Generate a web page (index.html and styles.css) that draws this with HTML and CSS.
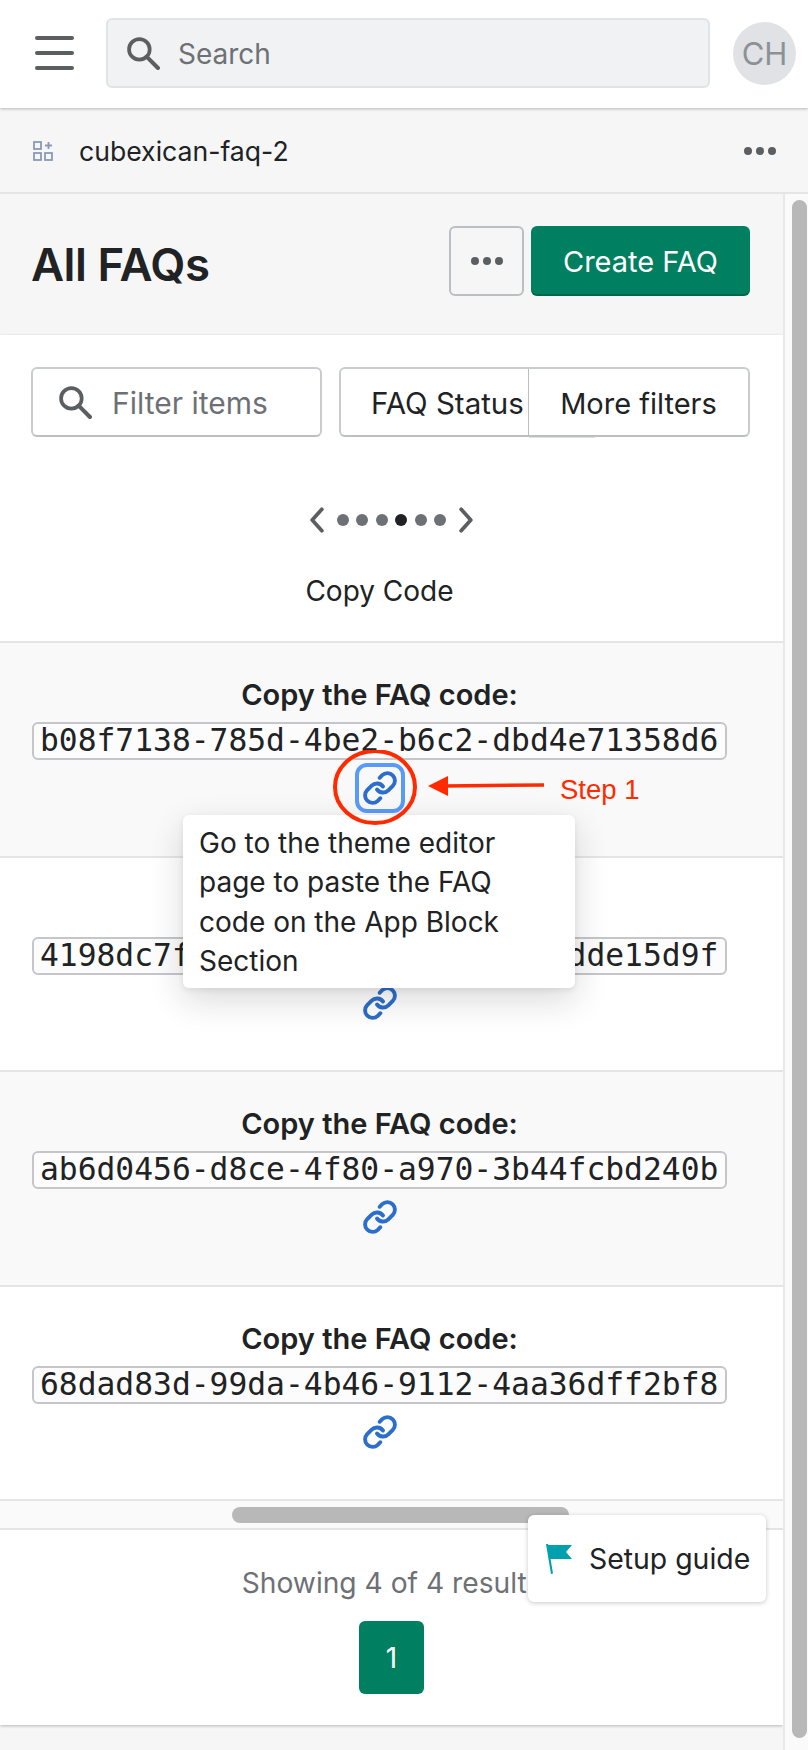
FILE: index.html
```html
<!DOCTYPE html>
<html lang="en">
<head>
  <meta charset="UTF-8" />
  <meta name="viewport" content="width=device-width, initial-scale=1.0" />
  <title>All FAQs</title>
  <link rel="stylesheet" href="styles.css">
</head>
<body>
  <svg class="defs" width="0" height="0">
    <symbol id="i-search" viewBox="0 0 32 32">
      <circle cx="12" cy="12" r="10" fill="none" stroke="currentColor" stroke-width="3.6" />
      <path d="M19 19l11 11" fill="none" stroke="currentColor" stroke-width="4" stroke-linecap="round" />
    </symbol>
    <symbol id="i-dots" viewBox="0 0 32 8">
      <circle cx="4" cy="4" r="4" fill="currentColor" />
      <circle cx="16" cy="4" r="4" fill="currentColor" />
      <circle cx="28" cy="4" r="4" fill="currentColor" />
    </symbol>
    <symbol id="i-link" viewBox="0 0 24 24">
      <path d="M10 13a5 5 0 0 0 7.54.54l3-3a5 5 0 0 0-7.07-7.07l-1.72 1.71" fill="none" stroke="currentColor" stroke-width="2.6" stroke-linecap="round" stroke-linejoin="round" />
      <path d="M14 11a5 5 0 0 0-7.54-.54l-3 3a5 5 0 0 0 7.07 7.07l1.71-1.71" fill="none" stroke="currentColor" stroke-width="2.6" stroke-linecap="round" stroke-linejoin="round" />
    </symbol>
  </svg>

  <header class="topbar">
    <div class="burger"><span></span><span></span><span></span></div>
    <div class="search">
      <svg class="search-icon"><use href="#i-search" /></svg>
      <span>Search</span>
    </div>
    <div class="avatar">CH</div>
  </header>

  <div class="appbar">
    <svg class="app-icon" viewBox="0 0 20 20">
      <rect x="1" y="1" width="7" height="7" />
      <rect x="1" y="12" width="7" height="7" />
      <rect x="12" y="12" width="7" height="7" />
      <path d="M15.500 1v7M12 4.500h7" />
    </svg>
    <span class="app-name">cubexican-faq-2</span>
    <svg class="app-dots"><use href="#i-dots" /></svg>
  </div>

  <div class="frame">
    <main class="main">
      <div class="page-head">
        <h1>All FAQs</h1>
        <div class="actions">
          <button class="btn-more"><svg><use href="#i-dots" /></svg></button>
          <button class="btn-primary">Create FAQ</button>
        </div>
      </div>

      <section class="card">
        <div class="filters">
          <div class="filter-input">
            <svg class="search-icon"><use href="#i-search" /></svg>
            <span>Filter items</span>
          </div>
          <div class="filter-group">
            <button class="filter-status">FAQ Status</button>
            <button class="filter-more">More filters</button>
          </div>
        </div>

        <div class="pager-dots">
          <svg class="chev" viewBox="0 0 14 24"><path d="M12 2L3 12l9 10" /></svg>
          <i></i><i></i><i></i><i class="on"></i><i></i><i></i>
          <svg class="chev" viewBox="0 0 14 24"><path d="M2 2l9 10-9 10" /></svg>
        </div>

        <div class="col-head">Copy Code</div>

        <div class="row shaded">
          <strong>Copy the FAQ code:</strong>
          <div class="code">b08f7138-785d-4be2-b6c2-dbd4e71358d6</div>
          <div class="link-btn focus"><svg><use href="#i-link" /></svg></div>
          <div class="tooltip">Go to the theme editor page to paste the FAQ code on the App Block Section</div>
          <svg class="note" viewBox="0 0 320 80">
            <ellipse cx="43" cy="37" rx="40" ry="36" />
            <path class="shaft" d="M112 36L212 35" />
            <path class="head" d="M96 36l20-10v20z" />
          </svg>
          <span class="step">Step 1</span>
        </div>
        <div class="row covered">
          <div class="code">4198dc7f-6a1c-4d35-8e27-f0c1dde15d9f</div>
          <div class="link-btn"><svg><use href="#i-link" /></svg></div>
        </div>
        <div class="row shaded">
          <strong>Copy the FAQ code:</strong>
          <div class="code">ab6d0456-d8ce-4f80-a970-3b44fcbd240b</div>
          <div class="link-btn"><svg><use href="#i-link" /></svg></div>
        </div>
        <div class="row">
          <strong>Copy the FAQ code:</strong>
          <div class="code">68dad83d-99da-4b46-9112-4aa36dff2bf8</div>
          <div class="link-btn"><svg><use href="#i-link" /></svg></div>
        </div>

        <div class="hscroll"><div class="hthumb"></div></div>

        <div class="results">
          <p>Showing 4 of 4 results</p>
          <div class="page-num">1</div>
        </div>
      </section>
    </main>
    <div class="gutter"><div class="vthumb"></div></div>
  </div>

  <div class="guide">
    <svg viewBox="0 0 28 32"><path d="M1 1l5 30 2-.4-2.400-14.600H27l-6-7 6-7H3.500L3 1z" /></svg>
    <span>Setup guide</span>
  </div>
</body>
</html>
```

FILE: styles.css
```css
* { box-sizing: border-box; }
html, body { margin: 0; padding: 0; }
body { position: relative; width: 808px; height: 1750px; overflow: hidden; background: #f6f6f7; color: #202223; font-family: Inter, "Noto Sans", sans-serif; font-size: 28px; }
button { font: inherit; color: inherit; cursor: pointer; }
.defs { position: absolute; }

.topbar { position: relative; z-index: 2; display: flex; align-items: center; height: 108px; padding: 0 12px 2px 35px; background: white; box-shadow: 0 1px 3px rgba(0,0,0,0.25); }
.burger { display: flex; flex-direction: column; gap: 11px; width: 39px; margin-right: 32px; }
.burger span { display: block; height: 4px; border-radius: 2px; background: #5c5f62; }
.search { display: flex; align-items: center; flex: 1; height: 70px; padding-left: 19px; background: #f1f2f3; border: 2px solid #e1e3e5; border-radius: 6px; color: #6d7175; }
.search span { padding-top: 2px; }
.search-icon { flex: none; width: 33px; height: 33px; margin-right: 18px; color: #5c5f62; }
.avatar { display: flex; align-items: center; justify-content: center; width: 63px; height: 63px; margin-left: 23px; border-radius: 50%; background: #e0e2e5; color: #8c9196; font-size: 31px; }

.appbar { display: flex; align-items: center; height: 86px; padding: 2px 32px 0 33px; border-bottom: 2px solid #e4e5e7; }
.app-icon { width: 20px; height: 20px; margin-right: 26px; fill: none; stroke: #8a9ab5; stroke-width: 1.800; }
.app-name { flex: 1; font-size: 26.600px; }
.app-dots { width: 32px; height: 8px; color: #5c5f62; }

.frame { display: flex; }
.main { width: 783px; }
.gutter { width: 25px; height: 1556px; padding: 6px 3px 0 7px; background: #fafafa; border-left: 2px solid #e8e8e9; }
.vthumb { width: 15px; height: 1538px; border-radius: 8px; background: #b8b8b8; }

.page-head { display: flex; justify-content: space-between; height: 141px; padding: 32px 33px 0 31px; }
h1 { margin: 11px 0 0; font-size: 45.500px; font-weight: 600; letter-spacing: -0.5px; }
.actions { display: flex; gap: 7px; }
.btn-more { display: flex; align-items: center; justify-content: center; width: 75px; height: 70px; background: transparent; border: 2px solid #babfc3; border-radius: 6px; color: #5c5f62; }
.btn-more svg { width: 32px; height: 8px; }
.btn-primary { width: 219px; height: 70px; padding: 0; background: #008060; color: white; border: 0; border-radius: 6px; font-size: 29px; box-shadow: inset 0 -2px 0 rgba(0,0,0,0.2); }

.card { height: 1390px; background: white; box-shadow: 0 1px 3px rgba(0,0,0,0.25); }
.filters { display: flex; gap: 17px; padding: 32px 33px 0 31px; }
.filter-input { display: flex; align-items: center; width: 291px; height: 70px; padding: 2px 0 0 26px; border: 2px solid #c9cccf; border-bottom-color: #babfc3; border-radius: 6px; color: #6d7175; font-size: 30px; }
.filter-input .search-icon { margin-top: -2px; margin-right: 20px; }
.filter-group { display: flex; width: 411px; height: 70px; border: 2px solid #c9cccf; border-bottom-color: #babfc3; border-radius: 6px; font-size: 29.500px; }
.filter-status { width: 188px; padding: 2px 0 0 30px; background: none; border: 0; border-right: 1px solid #babfc3; text-align: left; white-space: nowrap; }
.filter-more { position: relative; flex: 1; padding: 2px 0 0; background: none; border: 0; font-size: 29px; }
.filter-more::after { content: ""; position: absolute; left: 0; bottom: -3px; width: 66px; height: 1px; background: #dfe1e3; }

.pager-dots { display: flex; align-items: center; justify-content: center; gap: 7.600px; height: 26px; margin: 70px 0 0; }
.pager-dots i { width: 12px; height: 12px; border-radius: 50%; background: #6d7175; }
.pager-dots i.on { background: #202223; }
.chev { width: 15px; height: 26px; margin: 0 5px; fill: none; stroke: #5c5f62; stroke-width: 3.500; stroke-linecap: round; stroke-linejoin: round; }

.col-head { height: 110px; padding: 42px 24px 0 0; border-bottom: 2px solid #e4e5e7; text-align: center; line-height: 32px; }

.row { position: relative; display: flex; flex-direction: column; align-items: center; height: 214.500px; padding: 33px 24px 0 0; border-bottom: 2px solid #e4e5e7; }
.row.covered { padding-top: 71px; }
.row.shaded { background: #f9f9f9; }
.row strong { font-size: 29px; font-weight: 600; line-height: 38px; }
.code { flex: none; width: 695px; height: 38px; margin-top: 8px; padding-left: 6px; background: #fcfcfc; border: 2px solid #c4c6c9; border-radius: 6px; font-family: "DejaVu Sans Mono", "Liberation Mono", monospace; font-size: 31.300px; line-height: 33px; white-space: nowrap; overflow: hidden; }
.link-btn { display: flex; align-items: center; justify-content: center; width: 50px; height: 50px; margin-top: 3px; color: #2c6ecb; }
.link-btn svg { width: 36px; height: 36px; }
.link-btn.focus { border: 4px solid #5a9bf8; border-radius: 12px; }

.tooltip { position: absolute; z-index: 3; left: 183px; top: 172px; width: 392px; height: 173px; padding: 9px 16px 0; background: white; border-radius: 6px; box-shadow: 0 12px 34px rgba(23,24,24,0.16), 0 2px 6px rgba(0,0,0,0.08); line-height: 39.300px; }
.note { position: absolute; z-index: 4; left: 332px; top: 107px; width: 320px; height: 80px; fill: none; }
.note ellipse { stroke: #ff2a00; stroke-width: 4; }
.note .shaft { stroke: #ff2a00; stroke-width: 3.500; }
.note .head { fill: #ff2a00; }
.step { position: absolute; z-index: 4; left: 560px; top: 129px; color: #ff2a00; font-family: "Liberation Sans", Arial, sans-serif; font-size: 27.500px; line-height: 36px; }

.hscroll { height: 29px; padding: 6px 0 0 232px; background: #fafafa; border-bottom: 2px solid #e4e5e7; }
.hthumb { width: 337px; height: 16px; border-radius: 8px; background: #b8b8b8; }

.results { display: flex; flex-direction: column; align-items: center; }
.results p { margin: 36px 0 0; font-size: 28.200px; line-height: 34px; color: #6d7175; }
.page-num { display: flex; align-items: center; justify-content: center; width: 65px; height: 73px; margin-top: 21px; background: #008060; border-radius: 6px; color: white; }

.guide { position: absolute; z-index: 5; left: 528px; top: 1515px; display: flex; align-items: center; width: 238px; height: 87px; padding-left: 17px; background: white; border-radius: 6px; box-shadow: 0 1px 5px rgba(0,0,0,0.22); font-size: 28.400px; }
.guide svg { flex: none; width: 28px; height: 32px; margin-right: 16px; fill: #00a0ac; }
```
